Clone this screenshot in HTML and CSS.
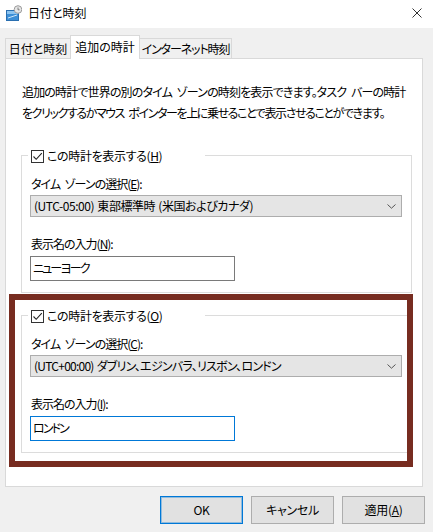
FILE: index.html
```html
<!DOCTYPE html>
<html lang="ja">
<head>
<meta charset="utf-8">
<link rel="stylesheet" href="styles.css">
</head>
<body>
<div class="window">
  <div class="titlebar">
    <svg class="appicon" width="16" height="16" viewBox="0 0 16 16">
      <rect x="0.5" y="5.5" width="12" height="10" fill="#3d8fd6" stroke="#2a6fb0"/>
      <rect x="1" y="6" width="11" height="3" fill="#8cc4f0"/>
      <line x1="2" y1="13" x2="11" y2="10" stroke="#cfe6f8" stroke-width="1"/>
      <circle cx="12" cy="4.5" r="3.8" fill="#e6e6e6" stroke="#9a9a9a"/>
      <path d="M12 2.5 V4.8 H13.6" fill="none" stroke="#666" stroke-width="0.8"/>
    </svg>
    <span class="title">日付と時刻</span>
    <svg class="close" width="10" height="10" viewBox="0 0 10 10">
      <path d="M0.5 0.5 L9.5 9.5 M9.5 0.5 L0.5 9.5" stroke="#333" stroke-width="1"/>
    </svg>
  </div>

  <div class="tabs">
    <div class="tab t1">日付と時刻</div>
    <div class="tab t2 selected">追加の時計</div>
    <div class="tab t3">インターネット時刻</div>
  </div>

  <div class="panel">
    <p class="desc"><span class="line1">追加の時計で世界の別のタイム ゾーンの時刻を表示できます。タスク バーの時計</span><br><span class="line2">をクリックするかマウス ポインターを上に乗せることで表示させることができます。</span></p>

    <div class="group">
      <div class="legend">
        <span class="checkbox"><svg width="11" height="11" viewBox="0 0 11 11"><path d="M1.5 5.5 L4.2 8.3 L9.8 2.2" fill="none" stroke="#222" stroke-width="1.1"/></svg></span>
        <span>この時計を表示する(<u>H</u>)</span>
      </div>
      <div class="label first">タイム ゾーンの選択(<u>E</u>):</div>
      <div class="combo"><span>(UTC-05:00) 東部標準時 (米国およびカナダ)</span>
        <svg class="chev" width="9" height="5" viewBox="0 0 9 5"><path d="M0.5 0.5 L4.5 4.2 L8.5 0.5" fill="none" stroke="#555" stroke-width="1"/></svg>
      </div>
      <div class="label second">表示名の入力(<u>N</u>):</div>
      <div class="textbox">ニューヨーク</div>
    </div>

    <div class="group g2">
      <div class="legend">
        <span class="checkbox"><svg width="11" height="11" viewBox="0 0 11 11"><path d="M1.5 5.5 L4.2 8.3 L9.8 2.2" fill="none" stroke="#222" stroke-width="1.1"/></svg></span>
        <span>この時計を表示する(<u>O</u>)</span>
      </div>
      <div class="label first">タイム ゾーンの選択(<u>C</u>):</div>
      <div class="combo"><span class="tight">(UTC+00:00) ダブリン、エジンバラ、リスボン、ロンドン</span>
        <svg class="chev" width="9" height="5" viewBox="0 0 9 5"><path d="M0.5 0.5 L4.5 4.2 L8.5 0.5" fill="none" stroke="#555" stroke-width="1"/></svg>
      </div>
      <div class="label second">表示名の入力(<u>I</u>):</div>
      <div class="textbox focused">ロンドン</div>
    </div>
  </div>

  <div class="buttons">
    <div class="btn default">OK</div>
    <div class="btn">キャンセル</div>
    <div class="btn">適用(<u>A</u>)</div>
  </div>

  <div class="highlight"></div>
</div>
</body>
</html>
```

FILE: styles.css
```css
* { box-sizing: border-box; }
html, body { margin: 0; padding: 0; }
body {
  background: #f0f0f0;
  font-family: "Noto Sans CJK JP", "Noto Sans", sans-serif;
  font-size: 12px;
  font-feature-settings: "palt";
  letter-spacing: -0.5px;
  word-spacing: 3px;
  color: #000;
  white-space: nowrap;
}
.window {
  position: relative;
  width: 433px;
  height: 532px;
  background: #f0f0f0;
  overflow: hidden;
}
.titlebar {
  height: 28px;
  background: #fff;
  display: flex;
  align-items: center;
  padding: 0 0 2px 6px;
}
.appicon { margin-right: 6px; margin-top: -1px; }
.title { line-height: 16px; letter-spacing: 0; }
.close { margin-left: auto; margin-right: 11px; }

.tabs {
  display: flex;
  align-items: flex-end;
  height: 23px;
  margin-top: 7px;
  padding-left: 5px;
}
.tab {
  flex: none;
  height: 20px;
  line-height: 19px;
  text-align: center;
  border: 1px solid #d9d9d9;
  border-bottom: none;
  background: #f0f0f0;
  letter-spacing: 0;
  overflow: hidden;
}
.t1 { width: 65px; border-right: none; }
.t2 { width: 70px; }
.t3 { width: 92px; border-left: none; letter-spacing: -1.1px; }
.tab.selected {
  position: relative;
  z-index: 1;
  height: 24px;
  margin-bottom: -1px;
  background: #fff;
  line-height: 21px;
}
.panel {
  margin-left: 5px;
  width: 418px;
  height: 429px;
  background: #fff;
  border: 1px solid #d9d9d9;
  padding: 22px 0 0 15px;
}
.desc {
  margin: 0 0 0 1px;
  line-height: 21px;
}
.line1 { letter-spacing: -0.85px; }
.line2 { letter-spacing: -1.4px; }
.group {
  margin-top: 32px;
  width: 391px;
  border: 1px solid #dcdcdc;
  padding: 0 0 11px 8px;
}
.group.g2 { margin-top: 22px; }
.legend {
  display: flex;
  align-items: center;
  gap: 3px;
  width: 177px;
  height: 14px;
  margin: -7px 0 0 -2px;
  padding-left: 3px;
  background: #fff;
  line-height: 14px;
  letter-spacing: -0.35px;
}
.checkbox {
  width: 13px;
  height: 13px;
  border: 1px solid #333;
  background: #fff;
  display: flex;
  align-items: center;
  justify-content: center;
}
.label {
  line-height: 16px;
  margin-left: 1px;
  letter-spacing: -1px;
}
.label.first { margin-top: 13px; }
.label.second { margin-top: 19px; }
.combo {
  margin-top: 3px;
  width: 372px;
  height: 22px;
  background: #e5e5e5;
  border: 1px solid #adadad;
  display: flex;
  align-items: center;
  padding-left: 3px;
  line-height: 16px;
  letter-spacing: -0.45px;
  word-spacing: 1px;
}
.combo .tight { letter-spacing: -0.75px; }
.chev { margin-left: auto; margin-right: 5px; }
.textbox {
  margin-top: 4px;
  width: 205px;
  height: 25px;
  border: 1px solid #7a7a7a;
  background: #fff;
  padding-left: 2px;
  line-height: 22px;
  letter-spacing: -1.9px;
}
.textbox.focused { border-color: #0078d7; }

.buttons {
  display: flex;
  justify-content: flex-end;
  gap: 8px;
  margin-top: 9px;
  padding-right: 8px;
}
.btn {
  width: 83px;
  height: 28px;
  background: #e1e1e1;
  border: 1px solid #adadad;
  text-align: center;
  line-height: 25px;
  letter-spacing: -0.3px;
}
.btn.default {
  border-color: #0078d7;
  box-shadow: inset 0 0 0 1px rgba(0, 120, 215, 0.35);
}
.highlight {
  position: absolute;
  left: 9px;
  top: 294px;
  width: 404px;
  height: 173px;
  border: 6px solid #772c20;
}
```
